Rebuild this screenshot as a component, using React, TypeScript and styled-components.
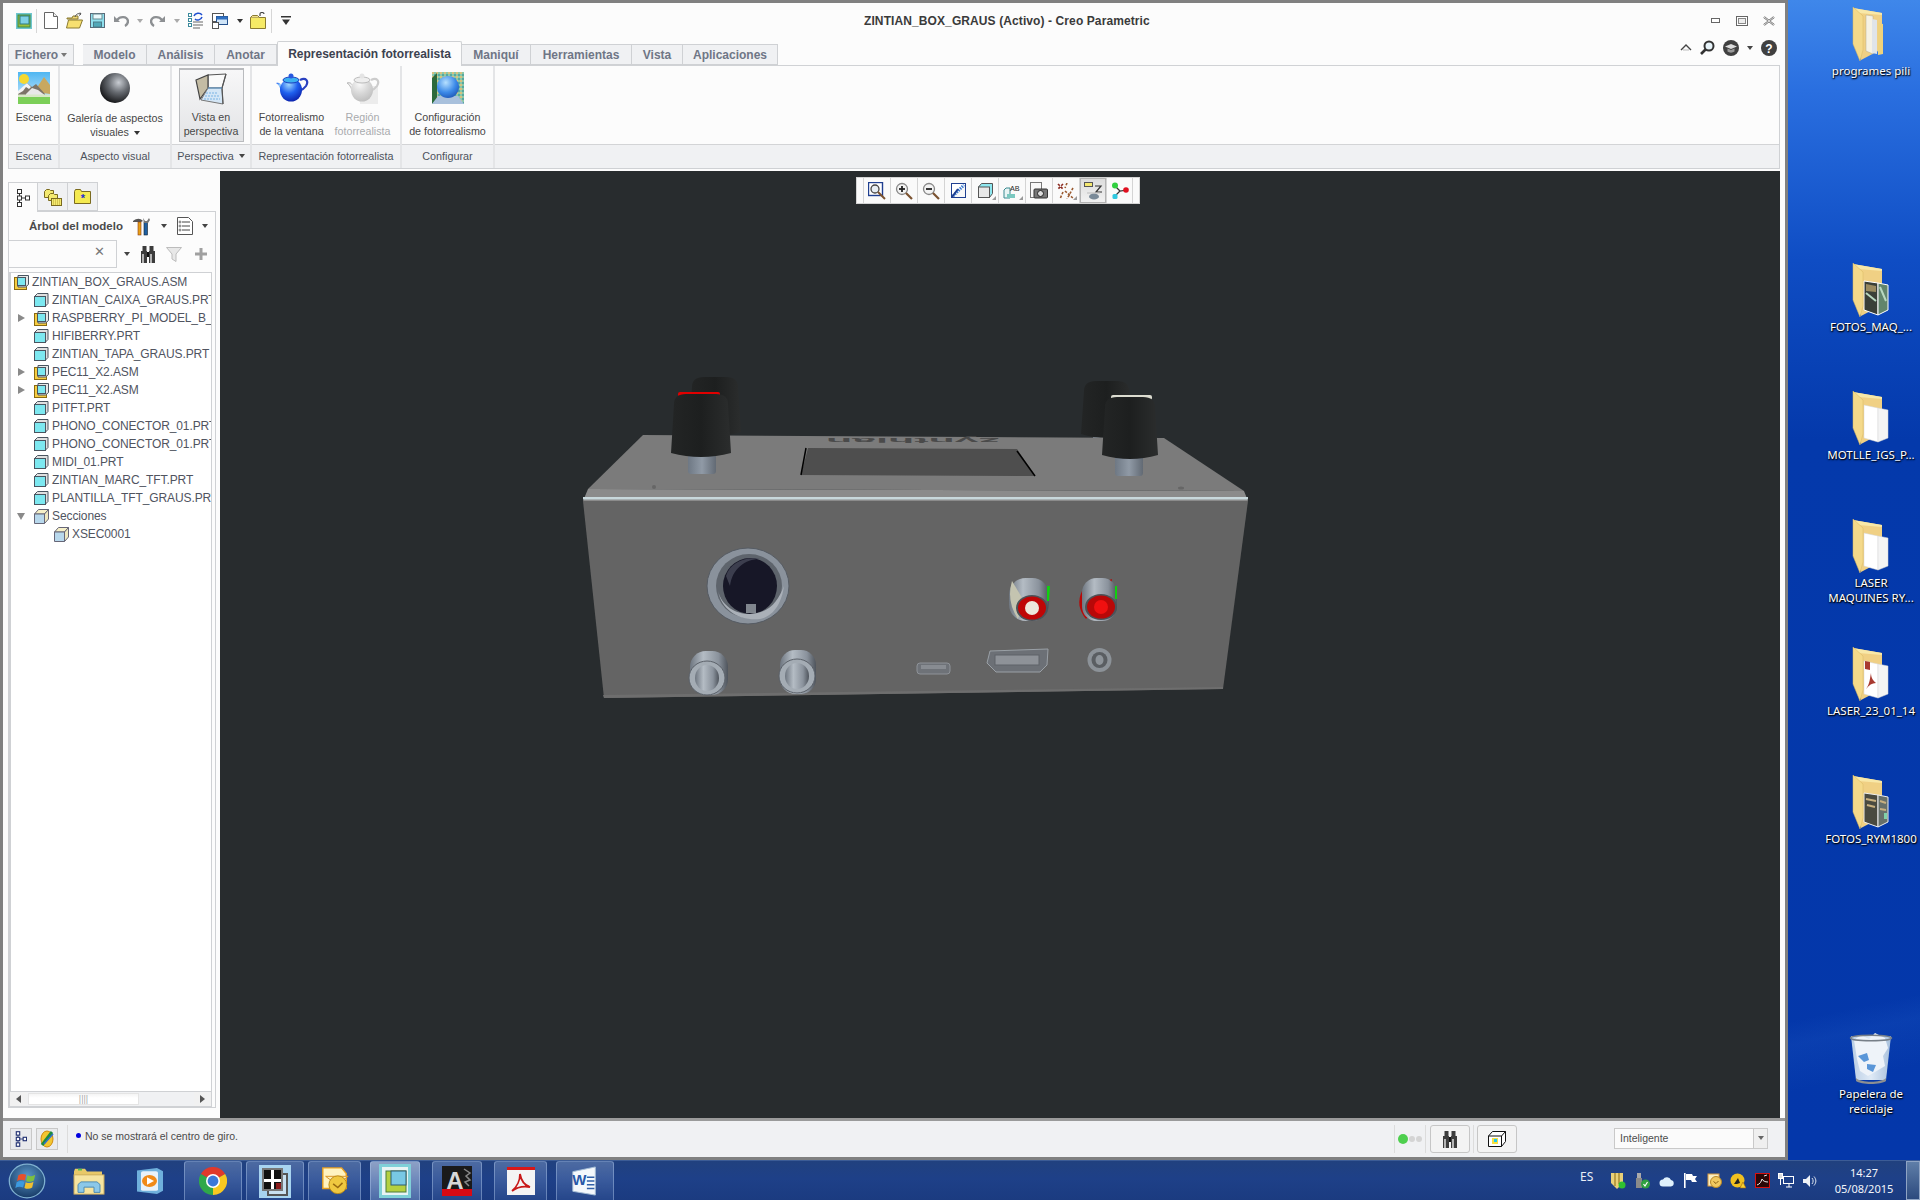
import React from "react";
import styled, { createGlobalStyle } from "styled-components";

const GlobalStyle = createGlobalStyle`
  html, body {
    margin: 0;
    padding: 0;
    background: #0438ab;
    overflow: hidden;
  }
  * {
    box-sizing: border-box;
  }
`;

const UI_FONT = `"Liberation Sans", Arial, sans-serif`;
const DESK_FONT = `"Noto Sans", "Open Sans", sans-serif`;

const Screen = styled.div`
  width: 1920px;
  height: 1200px;
  display: flex;
  flex-direction: column;
  overflow: hidden;
  font-family: ${UI_FONT};
`;

const Main = styled.div`
  height: 1160px;
  display: flex;
`;

const Window = styled.div`
  width: 1788px;
  height: 100%;
  display: flex;
  flex-direction: column;
  background: #fcfcfc;
  border: 3px solid #808080;
`;

const TitleBar = styled.div`
  height: 38px;
  padding-bottom: 3px;
  display: flex;
  align-items: center;
  flex-shrink: 0;
`;

const QuickBar = styled.div`
  width: 861px;
  display: flex;
  align-items: center;
  padding-left: 13px;
`;

const QuickSlot = styled.span<{ $ml?: number }>`
  display: flex;
  margin-left: ${({ $ml }) => $ml ?? 0}px;
`;

const QuickSep = styled.span<{ $ml: number }>`
  width: 1px;
  height: 24px;
  background: #d6d6d6;
  margin-left: ${({ $ml }) => $ml}px;
`;

const Title = styled.div`
  font-size: 12px;
  font-weight: bold;
  color: #3a3a3a;
  white-space: nowrap;
  letter-spacing: 0.1px;
`;

const WindowControls = styled.div`
  margin-left: auto;
  margin-right: 10px;
  display: flex;
  align-items: center;
  gap: 15px;
`;

const TabRow = styled.div`
  height: 24px;
  display: flex;
  align-items: flex-end;
  padding-left: 5px;
  flex-shrink: 0;
  position: relative;
  z-index: 1;
`;

const Tab = styled.div<{ $w: number; $active?: boolean; $ml?: number }>`
  width: ${({ $w }) => $w}px;
  height: ${({ $active }) => ($active ? 25 : 21)}px;
  margin-left: ${({ $ml }) => $ml ?? 0}px;
  margin-bottom: ${({ $active }) => ($active ? -1 : 0)}px;
  display: flex;
  align-items: center;
  justify-content: center;
  gap: 3px;
  font-size: 12px;
  font-weight: bold;
  color: ${({ $active }) => ($active ? "#3c4250" : "#6f7686")};
  background: ${({ $active }) => ($active ? "#fcfcfc" : "#f0f1f3")};
  border: 1px solid #cfd1d4;
  border-left-width: ${({ $active }) => ($active ? 1 : 0)}px;
  border-bottom-width: ${({ $active }) => ($active ? 0 : 1)}px;
  border-top-left-radius: ${({ $active }) => ($active ? 2 : 0)}px;
  border-top-right-radius: ${({ $active }) => ($active ? 2 : 0)}px;
  &:first-child {
    border-left-width: 1px;
  }
`;

const TabTools = styled.div`
  margin-left: auto;
  margin-right: 8px;
  height: 100%;
  display: flex;
  align-items: center;
  padding-bottom: 9px;
  margin-bottom: 1px;
`;

const ToolSlot = styled.span<{ $ml?: number }>`
  display: flex;
  margin-left: ${({ $ml }) => $ml ?? 0}px;
`;

const Ribbon = styled.div`
  height: 104px;
  margin: 0 5px;
  display: flex;
  flex-shrink: 0;
  border: 1px solid #cfd1d4;
  border-top-color: #d0d2d5;
`;

const RibbonGroup = styled.div<{ $w?: number }>`
  width: ${({ $w }) => ($w ? `${$w}px` : "auto")};
  flex: ${({ $w }) => ($w ? "none" : 1)};
  display: flex;
  flex-direction: column;
  border-right: ${({ $w }) => ($w ? "2px solid #e4e5e7" : "none")};
`;

const RibbonTools = styled.div`
  height: 78px;
  display: flex;
  justify-content: center;
  gap: 3px;
  padding-top: 2px;
`;

const GroupLabel = styled.div`
  flex: 1;
  display: flex;
  align-items: center;
  justify-content: center;
  gap: 5px;
  padding-bottom: 1px;
  font-size: 10.8px;
  color: #4d525c;
  background: #f0f1f3;
  border-top: 1px solid #d3d4d6;
  white-space: nowrap;
`;

const RibbonButton = styled.div<{ $w: number; $active?: boolean; $off?: boolean }>`
  width: ${({ $w }) => $w}px;
  height: 74px;
  display: flex;
  flex-direction: column;
  align-items: center;
  padding-top: ${({ $active }) => ($active ? 3 : 4)}px;
  font-size: 10.7px;
  line-height: 14px;
  text-align: center;
  white-space: nowrap;
  color: ${({ $off }) => ($off ? "#a9abae" : "#474747")};
  background: ${({ $active }) =>
    $active ? "linear-gradient(#f7f7f8, #e3e4e6)" : "transparent"};
  border: ${({ $active }) => ($active ? "1px solid #b9bbbe" : "none")};
  border-top-width: ${({ $active }) => ($active ? 2 : 0)}px;
`;

const RibbonIcon = styled.span<{ $gap?: number }>`
  height: 32px;
  margin-bottom: ${({ $gap }) => $gap ?? 6}px;
  display: block;
`;

const Caret = styled.span<{ $c?: string; $ml?: number }>`
  display: inline-block;
  width: 0;
  height: 0;
  margin-left: ${({ $ml }) => $ml ?? 0}px;
  border-left: 3px solid transparent;
  border-right: 3px solid transparent;
  border-top: 4px solid ${({ $c }) => $c ?? "#444"};
  vertical-align: middle;
`;

const Workspace = styled.div`
  flex: 1;
  min-height: 0;
  margin-top: 2px;
  display: flex;
  padding-right: 5px;
`;

const SidePanel = styled.div`
  width: 217px;
  display: flex;
  flex-direction: column;
  padding: 11px 4px 10px 5px;
`;

const PanelTabs = styled.div`
  height: 29px;
  display: flex;
  flex-shrink: 0;
`;

const PanelTab = styled.div<{ $active?: boolean }>`
  width: 30px;
  height: ${({ $active }) => ($active ? 30 : 29)}px;
  display: flex;
  align-items: center;
  justify-content: center;
  background: ${({ $active }) => ($active ? "#fcfcfc" : "#f0f1f3")};
  border: 1px solid #cfd1d4;
  border-left-width: ${({ $active }) => ($active ? 1 : 0)}px;
  border-bottom-width: ${({ $active }) => ($active ? 0 : 1)}px;
  position: relative;
`;

const PanelBody = styled.div`
  flex: 1;
  min-height: 0;
  display: flex;
  flex-direction: column;
  border: 1px solid #cfd1d4;
`;

const PanelHeader = styled.div`
  height: 28px;
  display: flex;
  align-items: center;
  padding-left: 20px;
  flex-shrink: 0;
`;

const PanelTitle = styled.span`
  width: 104px;
  font-size: 11.5px;
  font-weight: bold;
  color: #4a4a4a;
  white-space: nowrap;
`;

const SearchRow = styled.div`
  height: 28px;
  display: flex;
  align-items: center;
  flex-shrink: 0;
`;

const SearchBox = styled.div`
  width: 108px;
  height: 28px;
  display: flex;
  align-items: center;
  justify-content: flex-end;
  padding: 0 11px 6px 0;
  font-size: 13px;
  color: #777;
  border: 1px solid #cfd1d4;
  border-left: none;
`;

const Tree = styled.div`
  flex: 1;
  min-height: 0;
  margin: 4px 3px 0 0;
  overflow: hidden;
  background: #fff;
  border: 1px solid #cfd1d4;
  border-bottom: none;
  border-left-width: 2px;
`;

const TreeRow = styled.div<{ $pad: number }>`
  height: 18px;
  display: flex;
  align-items: center;
  padding-left: ${({ $pad }) => $pad}px;
  font-size: 12px;
  letter-spacing: -0.1px;
  color: #50545f;
  white-space: nowrap;
`;

const Toggle = styled.span`
  width: 16px;
  flex-shrink: 0;
  display: flex;
  align-items: center;
`;

const RowLabel = styled.span`
  margin-left: 3px;
`;

const ClosedArrow = styled.span`
  width: 0;
  height: 0;
  border-top: 4px solid transparent;
  border-bottom: 4px solid transparent;
  border-left: 7px solid #8a8a8a;
`;

const OpenArrow = styled.span`
  width: 0;
  height: 0;
  margin-left: -1px;
  border-left: 4.5px solid transparent;
  border-right: 4.5px solid transparent;
  border-top: 7px solid #8a8a8a;
`;

const ScrollBar = styled.div`
  height: 16px;
  margin-right: 3px;
  display: flex;
  align-items: stretch;
  flex-shrink: 0;
  background: #f0f1f3;
  border: 1px solid #cfd1d4;
`;

const ScrollEnd = styled.div`
  width: 17px;
  display: flex;
  align-items: center;
  justify-content: center;
  background: #f1f1f1;
`;

const ScrollThumb = styled.div`
  width: 111px;
  margin: 1px 0 1px 1px;
  display: flex;
  align-items: center;
  justify-content: center;
  background: linear-gradient(#f4f4f4, #fff 40%, #fff);
  border: 1px solid #e4e4e4;
  font-size: 9px;
  color: #aaa;
`;

const ScrollFill = styled.div`
  flex: 1;
`;

const LeftArrow = styled.span`
  width: 0;
  height: 0;
  border-top: 4px solid transparent;
  border-bottom: 4px solid transparent;
  border-right: 5px solid #555;
`;

const RightArrow = styled.span`
  width: 0;
  height: 0;
  border-top: 4px solid transparent;
  border-bottom: 4px solid transparent;
  border-left: 5px solid #555;
`;

const Canvas = styled.div`
  flex: 1;
  position: relative;
  background: #282c2e;
`;

const Scene = styled.svg`
  display: block;
  width: 100%;
  height: 100%;
`;

const ViewToolbar = styled.div`
  position: absolute;
  left: 636px;
  top: 6px;
  width: 284px;
  height: 27px;
  display: flex;
  padding: 0 5px 0 6px;
  background: #fafafa;
  border: 1px solid #d4d4d4;
`;

const ViewButton = styled.div<{ $on?: boolean }>`
  width: 27px;
  flex: none;
  display: flex;
  align-items: center;
  justify-content: center;
  position: relative;
  background: ${({ $on }) => ($on ? "linear-gradient(#dcdcdc, #f2f2f2)" : "transparent")};
  border-left: 1px solid #d4d4d4;
  box-shadow: ${({ $on }) => ($on ? "inset 0 0 0 1px #b4b4b4" : "none")};
  &:last-child {
    border-right: 1px solid #d4d4d4;
  }
`;

const StatusBar = styled.div`
  height: 39px;
  flex-shrink: 0;
  display: flex;
  align-items: center;
  background: #f0f1f3;
  border-top: 3px solid #9a9a9a;
  padding-left: 7px;
`;

const StatusIconButton = styled.div<{ $ml?: number }>`
  width: 22px;
  height: 22px;
  margin-left: ${({ $ml }) => $ml ?? 0}px;
  display: flex;
  align-items: center;
  justify-content: center;
  background: #e9eaec;
  border: 1px solid #c8c8c8;
`;

const StatusSep = styled.span<{ $ml: number }>`
  width: 1px;
  height: 28px;
  background: #dcdcdc;
  margin-left: ${({ $ml }) => $ml}px;
`;

const BlueDot = styled.span`
  width: 5px;
  height: 5px;
  margin: 0 4px 7px 8px;
  border-radius: 50%;
  background: #0000e0;
`;

const StatusText = styled.span`
  font-size: 10.5px;
  color: #4a4a4a;
  white-space: nowrap;
  margin-bottom: 6px;
`;

const StatusRight = styled.div`
  margin-left: auto;
  display: flex;
  align-items: center;
`;

const GreenDot = styled.span`
  width: 10px;
  height: 10px;
  margin-left: 3px;
  border-radius: 50%;
  background: #4ecf4e;
`;

const GreyDot = styled.span`
  width: 6px;
  height: 6px;
  margin-left: 1px;
  border-radius: 50%;
  background: #d4d4d4;
`;

const StatusButton = styled.div<{ $ml: number }>`
  width: 40px;
  height: 28px;
  margin-left: ${({ $ml }) => $ml}px;
  display: flex;
  align-items: center;
  justify-content: center;
  background: #f3f3f3;
  border: 1px solid #c6c6c6;
  border-radius: 3px;
`;

const SelectBox = styled.div`
  width: 154px;
  height: 21px;
  margin: 0 17px 2px 97px;
  display: flex;
  align-items: center;
  background: #fbfbfb;
  border: 1px solid #c9c9c9;
  font-size: 10.5px;
  color: #4d4d4d;
`;

const SelectText = styled.span`
  flex: 1;
  padding-left: 5px;
`;

const SelectArrow = styled.span`
  width: 14px;
  height: 100%;
  display: flex;
  align-items: center;
  justify-content: center;
  background: #efefef;
  border-left: 1px solid #c9c9c9;
`;

const Desktop = styled.div`
  flex: 1;
  position: relative;
  background:
    linear-gradient(168deg, rgba(255, 255, 255, 0) 86%, rgba(80, 150, 240, 0.08) 88%, rgba(255, 255, 255, 0) 92%),
    linear-gradient(#3f87ea 0, #2a6fe0 90px, #0f4dc4 260px, #0439ab 440px, #0437aa 100%);
`;

const DeskIcon = styled.div<{ $top: number }>`
  position: absolute;
  left: 36px;
  top: ${({ $top }) => $top}px;
  width: 94px;
  display: flex;
  flex-direction: column;
  align-items: center;
`;

const DeskLabel = styled.div`
  margin-top: 2px;
  font-family: ${DESK_FONT};
  font-size: 11.5px;
  line-height: 15px;
  text-align: center;
  color: #fff;
  white-space: nowrap;
  text-shadow: 0 1px 2px #000, 1px 1px 1px rgba(0, 0, 0, 0.8);
`;

const Taskbar = styled.div`
  height: 40px;
  display: flex;
  align-items: stretch;
  background: linear-gradient(#21417f, #1e4088 45%, #1b3b80);
  border-top: 1px solid #3c5c96;
`;

const StartSlot = styled.div`
  width: 54px;
  display: flex;
  align-items: center;
  justify-content: center;
`;

const PinSlot = styled.div<{ $w: number }>`
  width: ${({ $w }) => $w}px;
  display: flex;
  align-items: center;
  justify-content: center;
`;

const TaskButton = styled.div<{ $w: number; $ml: number; $on?: boolean }>`
  width: ${({ $w }) => $w}px;
  margin-left: ${({ $ml }) => $ml}px;
  display: flex;
  align-items: center;
  justify-content: center;
  border: 1px solid rgba(175, 200, 235, 0.45);
  border-bottom: none;
  border-radius: 3px 3px 0 0;
  background: ${({ $on }) =>
    $on
      ? "linear-gradient(rgba(230,240,255,0.55), rgba(150,180,225,0.4))"
      : "linear-gradient(rgba(170,195,235,0.32), rgba(70,105,170,0.25))"};
`;

const Tray = styled.div`
  margin-left: auto;
  display: flex;
  align-items: center;
`;

const LangLabel = styled.span`
  width: 30px;
  padding-left: 4px;
  font-family: ${DESK_FONT};
  font-size: 12px;
  color: #e9eef7;
  margin-bottom: 8px;
`;

const TraySlot = styled.span`
  width: 24px;
  display: flex;
  justify-content: center;
`;

const Clock = styled.div`
  width: 84px;
  font-family: ${DESK_FONT};
  font-size: 11px;
  line-height: 16px;
  text-align: center;
  color: #f2f5fa;
  white-space: nowrap;
`;

const ShowDesktop = styled.div`
  width: 14px;
  height: 100%;
  background: linear-gradient(#5f7ea8, #2c4a7e);
  border: 1px solid #8fa4c4;
`;

/* ---------- small icons ---------- */

const AppIcon = () => (
  <svg width="16" height="16" viewBox="0 0 16 16">
    <rect width="16" height="16" fill="#6fc6cf" />
    <rect x="2" y="2" width="12" height="12" fill="#9dbf3a" stroke="#3f8a3c" />
    <rect x="4" y="3" width="9" height="8" fill="#7fd0e6" stroke="#2f7c80" />
  </svg>
);

const NewIcon = () => (
  <svg width="14" height="17" viewBox="0 0 14 17">
    <path d="M.5.5h9l4 4v12H.5z" fill="#fff" stroke="#666" />
    <path d="M9.5.5v4h4" fill="#eee" stroke="#666" />
  </svg>
);

const OpenIcon = () => (
  <svg width="17" height="17" viewBox="0 0 17 17">
    <path d="M1 6h5l1-2h5v3H1z" fill="#f0d878" stroke="#8a7a30" />
    <path d="M.5 16l2-8h14l-3 8z" fill="#f7e070" stroke="#8a7a30" />
    <path d="M9 5c1-3 3-4 6-3l-1-1.500M15 2l-2 1.500" fill="none" stroke="#555" />
  </svg>
);

const SaveIcon = () => (
  <svg width="15" height="15" viewBox="0 0 15 15">
    <rect x=".5" y=".5" width="14" height="14" fill="#8fe0ee" stroke="#5a6a78" />
    <rect x="3" y="1" width="9" height="5" fill="#eafafc" stroke="#6a8a90" />
    <rect x="3.500" y="9" width="8" height="5" fill="#50a8b8" stroke="#4a7a88" />
  </svg>
);

const UndoIcon = ({ flip }: { flip?: boolean }) => (
  <svg width="15" height="12" viewBox="0 0 15 12">
    <g transform={flip ? "translate(15,0) scale(-1,1)" : undefined}>
      <path d="M3 5c3-4 10-4 11 1 0 2-1 4-3 5" fill="none" stroke="#8d9093" strokeWidth="2.400" />
      <path d="M0 1v6h6z" fill="#8d9093" />
    </g>
  </svg>
);

const RegenIcon = () => (
  <svg width="16" height="17" viewBox="0 0 16 17">
    <g fill="#fff" stroke="#3c8a9c">
      <rect x=".5" y="1.500" width="3" height="3" />
      <rect x=".5" y="6.500" width="3" height="3" />
      <rect x=".5" y="11.500" width="3" height="3" />
    </g>
    <path d="M6 4c1-3 6-4 8-1" fill="none" stroke="#1f4fd0" strokeWidth="1.500" />
    <path d="M14 5c-1 3-5 4-7 2" fill="none" stroke="#1f4fd0" strokeWidth="1.500" />
    <path d="M5 10h10M5 13h10M5 16h7" stroke="#666" />
  </svg>
);

const WindowsIcon = () => (
  <svg width="16" height="16" viewBox="0 0 16 16">
    <rect x=".5" y=".5" width="11" height="8" fill="#fff" stroke="#555" />
    <rect x="4.500" y="3.500" width="11" height="8" fill="#cfe4f7" stroke="#24508c" />
    <rect x="4.500" y="3.500" width="11" height="3" fill="#2f6fc0" />
    <rect x=".5" y="9.500" width="6" height="6" fill="#fff" stroke="#555" />
  </svg>
);

const FolderLockIcon = () => (
  <svg width="16" height="17" viewBox="0 0 16 17">
    <path d="M.5 5.500h15v11H.5z" fill="#f6ea66" stroke="#8a7a30" />
    <path d="M.5 5.500l2-2h5l2 2" fill="#f0e090" stroke="#8a7a30" />
    <path d="M10 4V2c0-2 4-2 4 0" fill="none" stroke="#444" strokeWidth="1.200" />
  </svg>
);

const MenuCaret = () => (
  <svg width="10" height="9" viewBox="0 0 10 9">
    <rect width="10" height="1.500" fill="#333" />
    <path d="M1 3.500h8L5 9z" fill="#333" />
  </svg>
);

const MinIcon = () => (
  <svg width="10" height="6" viewBox="0 0 10 6">
    <rect x=".5" y=".5" width="8" height="4" fill="#fff" stroke="#666" />
  </svg>
);

const MaxIcon = () => (
  <svg width="12" height="10" viewBox="0 0 12 10">
    <rect x=".5" y=".5" width="11" height="9" fill="#fff" stroke="#666" />
    <rect x="2.500" y="2.500" width="7" height="5" fill="#eee" stroke="#888" />
  </svg>
);

const CloseIcon = () => (
  <svg width="12" height="10" viewBox="0 0 12 10">
    <path d="M1 1l10 8M11 1L1 9" stroke="#666" strokeWidth="2.200" />
    <path d="M1 1l10 8M11 1L1 9" stroke="#fff" strokeWidth=".800" />
  </svg>
);

const ChevronUp = () => (
  <svg width="12" height="7" viewBox="0 0 12 7">
    <path d="M1 6l5-5 5 5" fill="none" stroke="#444" strokeWidth="1.400" />
    <path d="M3 6h6" stroke="#bbb" />
  </svg>
);

const FindIcon = () => (
  <svg width="15" height="15" viewBox="0 0 15 15">
    <circle cx="9" cy="6" r="4.500" fill="#e8f4fa" stroke="#333" strokeWidth="2" />
    <path d="M6 9l-5 5" stroke="#333" strokeWidth="2.600" />
  </svg>
);

const HatIcon = () => (
  <svg width="16" height="16" viewBox="0 0 16 16">
    <circle cx="8" cy="8" r="8" fill="#404040" />
    <path d="M2 6.500l6-2.500 6 2.500-6 2.500z" fill="#dcdcdc" />
    <path d="M4.500 8.500v3c2 1.500 5 1.500 7 0v-3L8 10z" fill="#9a9a9a" />
  </svg>
);

const HelpIcon = () => (
  <svg width="16" height="16" viewBox="0 0 16 16">
    <circle cx="8" cy="8" r="8" fill="#404040" />
    <text x="8" y="12.500" textAnchor="middle" fontFamily="Liberation Sans" fontWeight="bold" fontSize="12" fill="#fff">?</text>
  </svg>
);

const TreeTabIcon = () => (
  <svg width="14" height="18" viewBox="0 0 14 18">
    <g fill="#fff" stroke="#333">
      <rect x="1.500" y=".5" width="4" height="4" />
      <rect x="1.500" y="7" width="4" height="4" />
      <rect x="1.500" y="13.500" width="4" height="4" />
      <rect x="9.500" y="7" width="4" height="4" />
    </g>
    <path d="M3.500 4.500V7M3.500 11v2.500M5.500 9h4" stroke="#333" />
  </svg>
);

const LayersIcon = () => (
  <svg width="18" height="18" viewBox="0 0 18 18">
    <g fill="#f4ea70" stroke="#7a6a20">
      <path d="M.5 3.500l2-2h3l1 1h3v7h-9z" />
      <path d="M4.500 7.500l2-2h3l1 1h3v6h-9z" />
      <rect x="7.500" y="10.500" width="10" height="7" />
    </g>
    <path d="M9 12h7M9 14h7M9 16h7" stroke="#b8a030" strokeDasharray="1 1" />
  </svg>
);

const StarFolderIcon = () => (
  <svg width="17" height="15" viewBox="0 0 17 15">
    <path d="M.5 2.500l1-2h5l1 2h9v12H.5z" fill="#f4ea50" stroke="#7a6a20" />
    <text x="9" y="12.500" textAnchor="middle" fontSize="11" fontFamily="Liberation Sans" fontWeight="bold" fill="#1f2fd0">*</text>
  </svg>
);

const ToolsIcon = () => (
  <svg width="19" height="19" viewBox="0 0 19 19">
    <path d="M0 4c4-3 7-3 10 0l-2 1H0z" fill="#555" />
    <rect x="5" y="5" width="3" height="13" fill="#e8a018" stroke="#8a3a10" strokeWidth=".6" />
    <rect x="11" y="5" width="3.500" height="13" fill="#1f5fa0" stroke="#123" strokeWidth=".6" />
    <path d="M10 1l2 3h2l2-3 1 2-2 3h-4z" fill="#777" />
  </svg>
);

const ListIcon = () => (
  <svg width="16" height="18" viewBox="0 0 16 18">
    <path d="M.5.5h11l4 4v13H.5z" fill="#fff" stroke="#555" />
    <path d="M5 5h8M5 9h8M5 13h8" stroke="#444" />
    <g fill="#fff" stroke="#444" strokeWidth=".7">
      <circle cx="3" cy="5" r="1" />
      <circle cx="3" cy="9" r="1" />
      <circle cx="3" cy="13" r="1" />
    </g>
  </svg>
);

const Binoculars = () => (
  <svg width="16" height="17" viewBox="0 0 16 17">
    <rect x="2.500" y="0" width="4" height="6" fill="#3c3c3c" />
    <rect x="9.500" y="0" width="4" height="6" fill="#3c3c3c" />
    <rect x="1" y="5" width="6" height="12" fill="#3c3c3c" />
    <rect x="9" y="5" width="6" height="12" fill="#3c3c3c" />
    <rect x="2" y="8" width="2" height="9" fill="#b4b4b4" />
    <rect x="10" y="8" width="2" height="9" fill="#b4b4b4" />
    <rect x="7" y="6" width="2" height="5" fill="#111" />
  </svg>
);

const FilterIcon = () => (
  <svg width="16" height="15" viewBox="0 0 16 15">
    <path d="M.5.5h15L10 7v7.500L6 12V7z" fill="#e8e8e8" stroke="#bcbcbc" />
  </svg>
);

const PlusIcon = () => (
  <svg width="12" height="12" viewBox="0 0 12 12">
    <path d="M4.500 0h3v4.500H12v3H7.500V12h-3V7.500H0v-3h4.500z" fill="#a0a0a0" />
  </svg>
);

const PartIcon = () => (
  <svg width="15" height="14" viewBox="0 0 15 14" style={{ flexShrink: 0 }}>
    <path d="M.5 3.500l3-3h10.500v10l-3 3H.5z" fill="#e0e0e0" stroke="#4a5560" />
    <rect x=".5" y="3.500" width="11" height="10" fill="#7de8f0" stroke="#4a5560" />
  </svg>
);

const AsmIcon = () => (
  <svg width="15" height="15" viewBox="0 0 15 15" style={{ flexShrink: 0 }}>
    <rect x=".5" y="2.500" width="12" height="12" fill="#f6cc40" stroke="#8a6a10" />
    <path d="M4 .5h10.500v9l-3 2.500H4z" fill="#e8e8e8" stroke="#4a5560" />
    <rect x="3.500" y="2.500" width="8" height="8" fill="#7de8f0" stroke="#4a5560" />
  </svg>
);

const SectionIcon = () => (
  <svg width="15" height="15" viewBox="0 0 15 15" style={{ flexShrink: 0 }}>
    <path d="M.5 5l4-4.500h10l-4 4.500z" fill="#f6f0c8" stroke="#667" />
    <path d="M10.500 5l4-4.500v9.500l-4 4.500z" fill="#eee8c0" stroke="#667" />
    <path d="M.5 5h10v9.500H.5z" fill="#b8d8ec" stroke="#667" />
  </svg>
);

const StatusTreeIcon = () => (
  <svg width="12" height="16" viewBox="0 0 14 18">
    <g fill="#fff" stroke="#1f2f70" strokeWidth="1.300">
      <rect x="1.500" y=".5" width="4" height="4" />
      <rect x="1.500" y="7" width="4" height="4" />
      <rect x="1.500" y="13.500" width="4" height="4" />
      <rect x="9.500" y="7" width="4" height="4" />
    </g>
    <path d="M3.500 4.500V7M3.500 11v2.500M5.500 9h4" stroke="#1f2f70" />
  </svg>
);

const StatusPenIcon = () => (
  <svg width="16" height="18" viewBox="0 0 16 18">
    <ellipse cx="8" cy="9" rx="6" ry="8" fill="#f2c630" stroke="#d08a10" />
    <path d="M3 15L13 2" stroke="#1f8a3c" strokeWidth="3" />
    <path d="M5 14L14 4" stroke="#2f6fd0" strokeWidth="1.500" />
  </svg>
);

const BoxStatusIcon = () => (
  <svg width="18" height="16" viewBox="0 0 18 16">
    <path d="M.5 5l4-4.500h13v10l-4 5H.5z" fill="#fff" stroke="#111" />
    <path d="M.5 5h13v10.500M13.500 5l4-4.500" fill="none" stroke="#111" />
    <rect x="4" y="7" width="6" height="6" fill="#f6e040" />
    <rect x="6" y="8" width="3" height="3" fill="#20c8f0" />
  </svg>
);

/* ---------- ribbon pictures ---------- */

const SceneIcon = () => (
  <svg width="32" height="32" viewBox="0 0 32 32">
    <defs>
      <linearGradient id="sky" x1="0" y1="0" x2="0" y2="1">
        <stop offset="0" stopColor="#4fb6f2" />
        <stop offset="1" stopColor="#d8eefc" />
      </linearGradient>
    </defs>
    <rect width="32" height="32" fill="url(#sky)" />
    <path d="M16 20l10-15 6 8v9z" fill="#c8a860" />
    <path d="M0 21l9-10 5 4 4-3 9 10v3H0z" fill="#7c7468" />
    <path d="M0 19l9-8 4 4-2 2-3-2-3 4-5 3z" fill="#f4f4f4" />
    <path d="M8 22l6-6 6 2 8 6H8z" fill="#e8e8e8" />
    <rect y="24" width="32" height="8" fill="#7ccf58" />
    <rect y="22.500" width="32" height="2.500" fill="#d8e8c8" />
    <circle cx="6" cy="7" r="5" fill="#f6d830" />
  </svg>
);

const SphereIcon = () => (
  <svg width="32" height="32" viewBox="0 0 32 32">
    <defs>
      <radialGradient id="sphere" cx="0.62" cy="0.32" r="0.75">
        <stop offset="0" stopColor="#c8ccd2" />
        <stop offset="0.45" stopColor="#666a70" />
        <stop offset="1" stopColor="#0c0c0e" />
      </radialGradient>
    </defs>
    <circle cx="16" cy="16" r="15" fill="url(#sphere)" />
  </svg>
);

const PerspectiveIcon = () => (
  <svg width="32" height="32" viewBox="0 0 32 32">
    <path d="M13 2l18-1-4 14H13z" fill="#fafafa" stroke="#555" />
    <path d="M1 7l12-5v13L5 26z" fill="#c4bca4" stroke="#444" strokeWidth="1.200" />
    <path d="M13 15h14l1 16-22-4z" fill="#d4e6f6" stroke="#777" />
    <path d="M11 20h12M10 23h15M9 26h16" stroke="#7ab4e4" strokeDasharray="2 1" />
    <path d="M31 1l-4 14 1 16" fill="none" stroke="#555" strokeWidth="1.200" />
    <path d="M13 15h14" stroke="#5a9ad0" />
  </svg>
);

const TeapotIcon = ({ muted }: { muted?: boolean }) => {
  const id = muted ? "potGrey" : "potBlue";
  return (
    <svg width="34" height="32" viewBox="0 0 34 32">
      <defs>
        <radialGradient id={id} cx="0.4" cy="0.25" r="0.8">
          <stop offset="0" stopColor={muted ? "#f8f8f8" : "#9fd8ff"} />
          <stop offset="0.5" stopColor={muted ? "#d8d8d8" : "#1f60ee"} />
          <stop offset="1" stopColor={muted ? "#bcbcbc" : "#0a1ea8"} />
        </radialGradient>
      </defs>
      {muted && <rect x="14" y="14" width="18" height="18" fill="#ececec" />}
      <path d="M1 11c3-1 4 0 6 3l4 3-3 4c-3-3-3-8-7-10z" fill={`url(#${id})`} stroke={muted ? "#bbb" : "none"} />
      <path d="M25 8c6-3 9 1 6 6-2 3-4 4-7 5" fill="none" stroke={muted ? "#ccc" : "#2a40c0"} strokeWidth="2.200" />
      <ellipse cx="16" cy="18" rx="11" ry="11.500" fill={`url(#${id})`} />
      <ellipse cx="16" cy="8" rx="8" ry="3" fill={muted ? "#eee" : "#3cb0f0"} stroke={muted ? "#bbb" : "#1a40c0"} />
      <circle cx="16" cy="4" r="2.500" fill={muted ? "#e4e4e4" : "#2858e0"} />
    </svg>
  );
};

const ConfigIcon = () => (
  <svg width="32" height="32" viewBox="0 0 32 32">
    <defs>
      <radialGradient id="cfgBall" cx="0.4" cy="0.3" r="0.75">
        <stop offset="0" stopColor="#b6e0ff" />
        <stop offset="0.6" stopColor="#3c8ae8" />
        <stop offset="1" stopColor="#1f58b8" />
      </radialGradient>
      <pattern id="noise" width="4" height="4" patternUnits="userSpaceOnUse">
        <rect width="4" height="4" fill="#8cc8a8" />
        <rect width="2" height="2" fill="#d8c080" />
        <rect x="2" y="2" width="2" height="2" fill="#58a8a0" />
      </pattern>
    </defs>
    <rect width="32" height="32" fill="url(#noise)" />
    <path d="M0 6l5-5v26l-5 5z" fill="#2c6a3c" />
    <path d="M0 32l6-8h20l6 8z" fill="#a8c0dc" />
    <circle cx="16" cy="15" r="11" fill="url(#cfgBall)" />
  </svg>
);

/* ---------- view toolbar ---------- */

const ZoomFit = () => (
  <svg width="18" height="18" viewBox="0 0 18 18">
    <rect x=".5" y=".5" width="14" height="13" fill="#fff" stroke="#1f3f90" strokeWidth="1.400" />
    <circle cx="7" cy="7" r="4" fill="#e8eef4" stroke="#444" strokeWidth="1.300" />
    <path d="M10 10l7 7" stroke="#7a5230" strokeWidth="2" />
  </svg>
);

const ZoomGlass = ({ plus }: { plus?: boolean }) => (
  <svg width="18" height="18" viewBox="0 0 18 18">
    <circle cx="7" cy="7" r="5.500" fill="#f4f4f4" stroke="#888" strokeWidth="1.300" />
    <path d="M4 7h6" stroke="#222" strokeWidth="1.800" />
    {plus && <path d="M7 4v6" stroke="#222" strokeWidth="1.800" />}
    <path d="M11 11l6 6" stroke="#7a5230" strokeWidth="2.200" />
  </svg>
);

const ShadeIcon = () => (
  <svg width="15" height="15" viewBox="0 0 15 15">
    <rect x=".5" y=".5" width="14" height="14" fill="#fff" stroke="#1f3f90" />
    <path d="M2 14L14 2v12z" fill="#f8f8f8" />
    <path d="M2 13L13 2" stroke="#3a7ad0" strokeWidth="3" strokeDasharray="1.500 1" />
    <path d="M1 14L7 6" stroke="#1f3f90" strokeWidth="2" />
  </svg>
);

const CubeIcon = () => (
  <svg width="15" height="15" viewBox="0 0 15 15">
    <path d="M.5 4l3-3.500h11v10l-3 4H.5z" fill="#8fe8f0" stroke="#555" />
    <rect x=".5" y="4" width="11" height="10.500" fill="#e8e8e8" stroke="#555" />
  </svg>
);

const LabelIcon = () => (
  <svg width="19" height="16" viewBox="0 0 19 16">
    <path d="M1 7l2-2h4v10H1z" fill="#e8f4f4" stroke="#3a8a90" />
    <rect x="4" y="11" width="8" height="4" fill="#7ac8c0" />
    <text x="7" y="8" fontFamily="Liberation Mono" fontSize="8" fill="#333">AB</text>
  </svg>
);

const CameraIcon = () => (
  <svg width="18" height="17" viewBox="0 0 18 17">
    <rect x=".5" y=".5" width="11" height="15" fill="#f8f8f8" stroke="#777" />
    <rect x="4" y="7" width="13.500" height="9" rx="1" fill="#777" stroke="#333" />
    <circle cx="10.500" cy="11.500" r="3" fill="#ddd" stroke="#222" />
  </svg>
);

const PlanesIcon = () => (
  <svg width="18" height="16" viewBox="0 0 18 16">
    <g strokeWidth="1.600" strokeDasharray="2.500 1.500" fill="none">
      <path d="M1 1l5 5M6 1L1 6" stroke="#8a2a20" />
      <path d="M10 0L8 5M6 9L3 16M16 5l-6 11M8 8l9 8" stroke="#9a5a30" />
    </g>
  </svg>
);

const DisplayIcon = () => (
  <svg width="19" height="18" viewBox="0 0 19 18">
    <rect x=".5" y=".5" width="8" height="4" fill="#f4e870" stroke="#555" />
    <path d="M11 4h6l-5 6h6" fill="none" stroke="#333" strokeWidth="1.200" />
    <ellipse cx="10" cy="14.500" rx="5" ry="3" fill="#7a8a98" />
    <path d="M3 11h13" stroke="#bbb" />
  </svg>
);

const AxesIcon = () => (
  <svg width="18" height="18" viewBox="0 0 18 18">
    <path d="M4 4l5 5 7-1M9 9l-5 5" stroke="#333" strokeWidth="1.200" fill="none" />
    <circle cx="4" cy="3.500" r="3" fill="#30d040" />
    <circle cx="15" cy="8" r="2.800" fill="#e01020" />
    <rect x="1.500" y="12" width="5" height="5" rx="1.500" fill="#30c8e0" />
  </svg>
);

const CornerMark = styled.span`
  position: absolute;
  right: 2px;
  bottom: 3px;
  width: 0;
  height: 0;
  border-left: 4px solid transparent;
  border-bottom: 4px solid #999;
`;

/* ---------- desktop ---------- */

type FolderKind = "files" | "photo" | "paper" | "pdf" | "board";

const FolderContents = ({ kind }: { kind: FolderKind }) => {
  if (kind === "files")
    return (
      <g>
        <path d="M14 8l7 1v38l-7-3z" fill="#f6f2e4" stroke="#b4ac90" strokeWidth=".5" />
        <path d="M20 12l5 1v34l-5-1z" fill="#e0e4e8" />
        <path d="M26 16l5 1v30l-5 1z" fill="#efd27c" />
      </g>
    );
  if (kind === "photo")
    return (
      <g>
        <path d="M12 18l14 2v32l-14-5z" fill="#3a3f38" stroke="#fff" />
        <path d="M26 20l10 2v25l-10 5z" fill="#62856c" stroke="#fff" />
        <path d="M14 30l10 8M28 24l6 14" stroke="#b8d8c0" strokeWidth="2" />
        <path d="M14 21l10 2v6l-10-1z" fill="#998a60" />
      </g>
    );
  if (kind === "paper" || kind === "pdf")
    return (
      <g>
        <path d="M12 14l14 3v34l-14-4z" fill="#fff" stroke="#d4d4d4" strokeWidth=".5" />
        <path d="M26 17l10 2v28l-10 4z" fill="#f4f4f4" stroke="#d4d4d4" strokeWidth=".5" />
        {kind === "pdf" && (
          <path d="M13 14l5 1v8l-5-1zM14 42c4-5 4-12 5-16 0 6 3 8 5 10-4 0-7 2-10 6z" fill="#a83a30" />
        )}
      </g>
    );
  return (
    <g>
      <path d="M12 18l14 2v32l-14-5z" fill="#4a4a40" stroke="#eee" />
      <path d="M26 20l10 2v25l-10 5z" fill="#67706a" stroke="#eee" />
      <path d="M14 24l10 2M15 30l8 2M28 26l6 2M28 34l6 1" stroke="#c8b080" strokeWidth="2" />
      <rect x="32" y="38" width="3" height="6" fill="#80d0a8" />
    </g>
  );
};

const FolderIcon = ({ kind }: { kind: FolderKind }) => (
  <svg width="38" height="54" viewBox="0 0 38 54">
    <path d="M1 1l29 5v36L9 53z" fill="#f0d084" />
    <path d="M1 1l29 5v2L6 6z" fill="#f8e8a8" />
    <FolderContents kind={kind} />
    <path d="M1 0l10 9v34l-3 11-7-17z" fill="#f4d98a" stroke="#d8b860" strokeWidth=".5" />
  </svg>
);

const TrashIcon = () => (
  <svg width="44" height="52" viewBox="0 0 44 52">
    <defs>
      <linearGradient id="bin" x1="0" y1="0" x2="1" y2="0">
        <stop offset="0" stopColor="#b9cde4" />
        <stop offset="0.5" stopColor="#dfeaf6" />
        <stop offset="1" stopColor="#a8c0dc" />
      </linearGradient>
    </defs>
    <path d="M2 4h40l-5 44H7z" fill="url(#bin)" />
    <path d="M5 8l7-5 8 4 6-6 10 5 3 10-5 8 2 10-10 6-7 4-8-5-3-12z" fill="#eef3f9" />
    <path d="M9 24l9-3 2 7-5 2zM18 32l9 1-3 7-6-3z" fill="#5a96d8" />
    <ellipse cx="22" cy="6" rx="20.500" ry="2.800" fill="none" stroke="#777f88" strokeWidth="1.500" />
    <path d="M7 46c5 5 25 5 30 0v3c-5 4-25 4-30 0z" fill="#8c8f92" />
  </svg>
);

/* ---------- taskbar ---------- */

const StartOrb = () => (
  <svg width="38" height="36" viewBox="0 0 44 44" preserveAspectRatio="none">
    <defs>
      <radialGradient id="orb" cx="0.5" cy="0.35" r="0.7">
        <stop offset="0" stopColor="#5a96c8" />
        <stop offset="1" stopColor="#12345f" />
      </radialGradient>
    </defs>
    <circle cx="22" cy="22" r="20.500" fill="url(#orb)" stroke="#7fb0d0" strokeWidth="1.500" />
    <path d="M12 15c3-2 6-2 9-.5l-1.500 7c-3-1.500-6-1.500-9 .5z" fill="#e8502a" />
    <path d="M22.500 15c3 1.500 6 1.500 9-.5l-1.500 7c-3 2-6 2-9 .5z" fill="#7cc040" />
    <path d="M10 23.500c3-2 6-2 9-.5l-1.500 7c-3-1.500-6-1.500-9 .5z" fill="#3c9ae0" />
    <path d="M20.500 23.500c3 1.500 6 1.500 9-.5l-1.500 7c-3 2-6 2-9 .5z" fill="#f0c030" />
  </svg>
);

const ExplorerPin = () => (
  <svg width="32" height="28" viewBox="0 0 32 32" preserveAspectRatio="none">
    <path d="M1 5l1-3h10l2 3h15v24H1z" fill="#e8c868" />
    <rect x="5" y="2" width="4" height="2" fill="#50c050" />
    <rect x="1" y="9" width="30" height="22" fill="#f6e4a0" stroke="#c8a858" />
    <path d="M8 17h16l3 3v9H21v-6H11v6H5v-9z" fill="#8cc8e8" stroke="#4a88b0" />
  </svg>
);

const MediaPin = () => (
  <svg width="26" height="26" viewBox="0 0 26 32" preserveAspectRatio="none">
    <path d="M0 3l20-3 6 4v24l-6 4-20-3z" fill="#6fb0dc" />
    <rect x="4" y="4" width="17" height="24" rx="2" fill="#e8f2fa" />
    <circle cx="12.500" cy="16" r="7.500" fill="#f08a18" />
    <path d="M10 11.500l7 4.500-7 4.500z" fill="#fff" />
  </svg>
);

const ChromePin = () => (
  <svg width="28" height="28" viewBox="0 0 30 30">
    <path d="M15 15L2 7.500A15 15 0 0 1 28 7.500z" fill="#e0392b" />
    <path d="M15 15l13-7.500A15 15 0 0 1 15 30z" fill="#f8c820" />
    <path d="M15 15V30A15 15 0 0 1 2 7.500z" fill="#2fa84a" />
    <circle cx="15" cy="15" r="7.500" fill="#fff" />
    <circle cx="15" cy="15" r="5.800" fill="#3c78d8" />
  </svg>
);

const CrossPin = () => (
  <svg width="32" height="33" viewBox="0 0 32 33">
    <rect width="32" height="33" fill="#a8d4f0" />
    <rect x="9" y="9" width="19" height="21" fill="#c8e0f0" stroke="#555" strokeWidth="2" />
    <rect x="4" y="4" width="19" height="21" fill="#111" stroke="#777" strokeWidth="2" />
    <path d="M12 5h3v9h7v3h-7v7h-3v-7H5v-3h7z" fill="#fff" />
    <rect x="17" y="18" width="5" height="6" fill="#8a1a1a" />
  </svg>
);

const OutlookPin = () => (
  <svg width="30" height="30" viewBox="0 0 32 32">
    <path d="M3 2h20l5 6v16H3z" fill="#fff3c0" stroke="#e8a020" strokeWidth="1.500" />
    <path d="M6 11h24L18 20z" fill="#fbeeb8" stroke="#d89020" />
    <circle cx="19" cy="20" r="9.500" fill="#f0c840" stroke="#b88818" />
    <path d="M14 19l5 4 5-5" fill="none" stroke="#9a6a10" strokeWidth="1.600" />
  </svg>
);

const CreoPin = () => (
  <svg width="32" height="34" viewBox="0 0 32 34">
    <rect width="32" height="34" fill="#7fd0d8" />
    <rect x="3" y="3" width="26" height="28" fill="#e8f4f4" />
    <rect x="7" y="7" width="20" height="21" fill="#b4d040" stroke="#4a7a3c" />
    <rect x="12" y="7" width="15" height="14" fill="#78c8e4" stroke="#2f5c70" />
  </svg>
);

const AutocadPin = () => (
  <svg width="30" height="30" viewBox="0 0 30 30">
    <rect width="30" height="30" fill="#1a1a1a" />
    <rect y="23" width="30" height="7" fill="#d80a14" />
    <text x="13" y="23" textAnchor="middle" fontSize="24" fontWeight="bold" fontFamily="Liberation Sans" fill="#d8d8d8">A</text>
    <path d="M22 3l6 4-4 3 4 4-5 2 4 4" stroke="#888" strokeWidth="1.500" fill="none" />
  </svg>
);

const PdfPin = () => (
  <svg width="28" height="28" viewBox="0 0 28 28">
    <rect width="28" height="28" fill="#f4f4f4" />
    <rect width="28" height="3" fill="#d81818" />
    <path d="M5 24c5-4 8-11 8-17 1 6 4 11 10 13-6-1-13 0-18 4z" fill="none" stroke="#c81818" strokeWidth="1.800" />
  </svg>
);

const WordPin = () => (
  <svg width="30" height="30" viewBox="0 0 32 32">
    <path d="M3 6l24-5v30L3 27z" fill="#f4f8fc" stroke="#a8c0d8" />
    <path d="M18 12h8M18 16h8M18 20h8M18 24h8" stroke="#3060a8" strokeWidth="1.500" />
    <text x="10" y="20" textAnchor="middle" fontSize="16" fontWeight="bold" fontFamily="Liberation Sans" fill="#2858a8">W</text>
  </svg>
);

const Tray1 = () => (
  <svg width="16" height="17" viewBox="0 0 16 17">
    <path d="M1 1h12v10l-6 6-6-6z" fill="#e8d078" />
    <path d="M5 1v13M9 1v11" stroke="#a88a30" strokeWidth="1.500" />
    <circle cx="12" cy="13" r="3.500" fill="#30c030" />
  </svg>
);

const Tray2 = () => (
  <svg width="16" height="17" viewBox="0 0 16 17">
    <path d="M2 6h6v10H2z" fill="#8a8a8a" />
    <rect x="3" y="1" width="4" height="5" fill="#aaa" />
    <circle cx="11.500" cy="12" r="4.500" fill="#30a040" />
    <path d="M9.500 12l1.500 2 2.500-4" stroke="#fff" fill="none" strokeWidth="1.200" />
  </svg>
);

const Tray3 = () => (
  <svg width="15" height="12" viewBox="0 0 15 12">
    <path d="M4 11.500A3.500 3.500 0 0 1 4 4.500 4.500 4.500 0 0 1 12 5a3.300 3.300 0 0 1 0 6.500z" fill="#dff0fc" />
  </svg>
);

const Tray4 = () => (
  <svg width="15" height="15" viewBox="0 0 15 15">
    <rect x="1" y="0" width="1.600" height="15" fill="#fff" />
    <path d="M3 1h6l1 2h4l-2 3 2 3H9L8 7H3z" fill="#fff" />
  </svg>
);

const Tray5 = () => (
  <svg width="15" height="15" viewBox="0 0 15 15">
    <rect x="1" y="1" width="11" height="12" fill="#fbeec0" stroke="#d89a40" />
    <circle cx="9" cy="9" r="5.500" fill="#f0c860" stroke="#b88828" />
    <path d="M6.500 8.500l2.500 2 2.500-2.500" fill="none" stroke="#8a6010" />
  </svg>
);

const Tray6 = () => (
  <svg width="16" height="16" viewBox="0 0 16 16">
    <circle cx="7.500" cy="7.500" r="7" fill="#f0c020" />
    <path d="M4 11l4-6 2 5-3 1z" fill="#222" />
    <path d="M10 15l3-6 3 6z" fill="#f8d030" stroke="#a06010" strokeWidth=".6" />
  </svg>
);

const Tray7 = () => (
  <svg width="15" height="15" viewBox="0 0 15 15">
    <rect x=".5" y=".5" width="14" height="14" fill="#2a0808" stroke="#d81010" />
    <path d="M2 12c3-1 4-3 5-6 1 2 3 3 6 3M9 3l3-1" stroke="#eee" strokeWidth="1" fill="none" />
  </svg>
);

const Tray8 = () => (
  <svg width="16" height="15" viewBox="0 0 16 15">
    <rect x="5.500" y="3.500" width="10" height="7" fill="none" stroke="#fff" />
    <path d="M8 14h6M11 11v3" stroke="#fff" />
    <rect x="0.500" y="0.500" width="4" height="5" fill="#ddd" stroke="#fff" />
    <path d="M2.500 6v6" stroke="#fff" />
  </svg>
);

const Tray9 = () => (
  <svg width="14" height="14" viewBox="0 0 14 14">
    <path d="M0 5h3l4-4v12L3 9H0z" fill="#eef2f8" />
    <path d="M9 4c1.500 2 1.500 4 0 6M11 2.500c2.500 3 2.500 6 0 9" fill="none" stroke="#dfe6f0" />
  </svg>
);

/* ---------- the model in the viewport, in screen coordinates ---------- */

const Knob = ({ x, y, w, h }: { x: number; y: number; w: number; h: number }) => (
  <path
    d={`M${x + 3} ${y + 10} Q${x + 3} ${y} ${x + 15} ${y} L${x + w - 15} ${y} Q${x + w - 3} ${y} ${x + w - 3} ${y + 10} L${x + w} ${y + h - 5} Q${x + w / 2} ${y + h + 3} ${x} ${y + h - 5} Z`}
    fill="url(#knob)"
  />
);

const Barrel = ({ x, y, w, h }: { x: number; y: number; w: number; h: number }) => (
  <rect x={x} y={y} width={w} height={h} rx={w / 2.4} fill="url(#metal)" />
);

const BoxModel = () => (
  <Scene viewBox="220 170 1560 947">
    <defs>
      <linearGradient id="metal" x1="0" y1="0" x2="1" y2="0">
        <stop offset="0" stopColor="#6e7680" />
        <stop offset="0.35" stopColor="#b4bcc4" />
        <stop offset="0.75" stopColor="#8a929c" />
        <stop offset="1" stopColor="#4e545c" />
      </linearGradient>
      <linearGradient id="stem" x1="0" y1="0" x2="1" y2="0">
        <stop offset="0" stopColor="#6e7884" />
        <stop offset="0.5" stopColor="#909aa6" />
        <stop offset="1" stopColor="#626a74" />
      </linearGradient>
      <linearGradient id="knob" x1="0" y1="0" x2="1" y2="0">
        <stop offset="0" stopColor="#232525" />
        <stop offset="0.5" stopColor="#1d1f1f" />
        <stop offset="1" stopColor="#2b2d2d" />
      </linearGradient>
    </defs>

    <rect x="1093" y="436" width="12" height="18" fill="url(#stem)" />
    <Knob x={689} y={376} w={52} h={60} />
    <Knob x={1081} y={380} w={51} h={58} />

    <path d="M588 488L643 434L1164 437L1244 490Z" fill="#7b7b7b" />
    <path d="M588 488L1244 490L1248 500L583 500Z" fill="#8b8b8b" />
    <path d="M583 496H1248V498.500H583Z" fill="#c8d8dc" />
    <path d="M583 500L1248 500L1223 688L604 697Z" fill="#646464" />
    <path d="M604 697L1223 688L1223 686L603 694Z" fill="#6e6e6e" />

    <text
      transform="translate(913 436.500) rotate(180) scale(1 0.62)"
      textAnchor="middle"
      fontFamily="Liberation Sans"
      fontWeight="bold"
      fontSize="13"
      fill="#4a4a4a"
      textLength={174}
      lengthAdjust="spacingAndGlyphs"
    >
      zynthian
    </text>

    <path d="M801 474L808 447L1017 448L1035 475Z" fill="#4e4e4e" />
    <path d="M801 474L806 447" stroke="#000" strokeWidth="1.500" />
    <path d="M1017 450L1035 475" stroke="#000" strokeWidth="1.500" />
    <circle cx="654" cy="486" r="2" fill="#666" />
    <ellipse cx="1181" cy="487" rx="3" ry="1.500" fill="#666" />

    <rect x="688" y="452" width="28" height="21" rx="3" fill="url(#stem)" />
    <rect x="1115" y="454" width="28" height="21" rx="3" fill="url(#stem)" />
    <rect x="678" y="391" width="42" height="5" rx="2" fill="#e00000" />
    <Knob x={671} y={393} w={60} h={64} />
    <rect x="1111" y="394" width="41" height="5" rx="2" fill="#dcdcd0" />
    <Knob x={1102} y={396} w={56} h={63} />

    <ellipse cx="748" cy="585" rx="41" ry="38" fill="#8a929c" stroke="#565c64" />
    <ellipse cx="749" cy="585" rx="33" ry="32" fill="#5e646c" />
    <ellipse cx="750" cy="585" rx="27" ry="28" fill="#171727" />
    <path d="M726 575C730 562 745 555 760 558C745 558 732 568 730 585Z" fill="#3c3e4e" />
    <rect x="746" y="603" width="10" height="9" fill="#80868e" />
    <path d="M718 590C722 610 740 620 760 618C775 615 782 600 784 585C778 600 770 612 750 613C735 613 722 605 718 590Z" fill="#aab0b8" />

    <Barrel x={1009} y={577} w={40} h={43} />
    <path d="M1047 585L1050 585L1049 600L1047 600Z" fill="#10d010" />
    <path d="M1012 580Q1006 600 1018 618L1024 600Z" fill="#c4c4b0" />
    <ellipse cx="1032" cy="607" rx="16" ry="13" fill="#4c5258" />
    <ellipse cx="1032" cy="607" rx="14" ry="11.500" fill="#bf0606" />
    <ellipse cx="1032" cy="607" rx="7" ry="7" fill="#ece8dc" />

    <path d="M1082 590Q1075 605 1086 618L1110 590L1112 578Z" fill="#b80808" />
    <Barrel x={1082} y={577} w={35} h={43} />
    <path d="M1115 585L1117 585L1117 598L1115 598Z" fill="#10d010" />
    <ellipse cx="1101" cy="606" rx="16" ry="13" fill="#4c5258" />
    <ellipse cx="1101" cy="606" rx="14" ry="11.500" fill="#b80808" />
    <ellipse cx="1101" cy="606" rx="7" ry="7" fill="#f01010" />

    <Barrel x={690} y={650} w={38} h={44} />
    <ellipse cx="707" cy="677" rx="18" ry="17" fill="#a4acb4" stroke="#5a6068" />
    <ellipse cx="707" cy="677" rx="12" ry="13" fill="url(#metal)" />
    <Barrel x={780} y={649} w={36} h={44} />
    <ellipse cx="797" cy="675" rx="18" ry="17" fill="#a4acb4" stroke="#5a6068" />
    <ellipse cx="797" cy="675" rx="12" ry="13" fill="url(#metal)" />

    <rect x="917" y="662" width="33" height="11" rx="3" fill="#6e7278" stroke="#8e9298" />
    <rect x="921" y="664" width="25" height="4" fill="#888c92" />
    <path d="M990 650L1048 648L1047 664L1040 671H996L987 662Z" fill="#6c7076" stroke="#9aa0a6" />
    <rect x="995" y="654" width="44" height="10" fill="#8e9298" stroke="#5e6268" />
    <ellipse cx="1099.500" cy="659" rx="12" ry="12" fill="#8c9298" />
    <ellipse cx="1099.500" cy="659" rx="8" ry="8" fill="#5a5e62" />
    <ellipse cx="1099.500" cy="659" rx="4" ry="5" fill="#8e949a" />
  </Scene>
);

const TREE: { label: string; kind: "part" | "asm" | "section"; level: number; arrow?: "closed" | "open" }[] = [
  { label: "ZINTIAN_BOX_GRAUS.ASM", kind: "asm", level: 0 },
  { label: "ZINTIAN_CAIXA_GRAUS.PRT", kind: "part", level: 1 },
  { label: "RASPBERRY_PI_MODEL_B_", kind: "asm", level: 1, arrow: "closed" },
  { label: "HIFIBERRY.PRT", kind: "part", level: 1 },
  { label: "ZINTIAN_TAPA_GRAUS.PRT", kind: "part", level: 1 },
  { label: "PEC11_X2.ASM", kind: "asm", level: 1, arrow: "closed" },
  { label: "PEC11_X2.ASM", kind: "asm", level: 1, arrow: "closed" },
  { label: "PITFT.PRT", kind: "part", level: 1 },
  { label: "PHONO_CONECTOR_01.PRT", kind: "part", level: 1 },
  { label: "PHONO_CONECTOR_01.PRT", kind: "part", level: 1 },
  { label: "MIDI_01.PRT", kind: "part", level: 1 },
  { label: "ZINTIAN_MARC_TFT.PRT", kind: "part", level: 1 },
  { label: "PLANTILLA_TFT_GRAUS.PRT", kind: "part", level: 1 },
  { label: "Secciones", kind: "section", level: 1, arrow: "open" },
  { label: "XSEC0001", kind: "section", level: 2 },
];

const DESK_ITEMS: { top: number; kind: FolderKind; lines: string[] }[] = [
  { top: 7, kind: "files", lines: ["programes pili"] },
  { top: 263, kind: "photo", lines: ["FOTOS_MAQ_..."] },
  { top: 391, kind: "paper", lines: ["MOTLLE_IGS_P..."] },
  { top: 519, kind: "paper", lines: ["LASER", "MAQUINES RY..."] },
  { top: 647, kind: "pdf", lines: ["LASER_23_01_14"] },
  { top: 775, kind: "board", lines: ["FOTOS_RYM1800"] },
];

const App: React.FC = () => {
  return (
    <>
      <GlobalStyle />
      <Screen>
        <Main>
          <Window>
            <TitleBar>
              <QuickBar>
                <QuickSlot><AppIcon /></QuickSlot>
                <QuickSep $ml={4} />
                <QuickSlot $ml={7}><NewIcon /></QuickSlot>
                <QuickSlot $ml={8}><OpenIcon /></QuickSlot>
                <QuickSlot $ml={7}><SaveIcon /></QuickSlot>
                <QuickSlot $ml={9}><UndoIcon /></QuickSlot>
                <Caret $c="#aaa" $ml={8} />
                <QuickSlot $ml={7}><UndoIcon flip /></QuickSlot>
                <Caret $c="#aaa" $ml={9} />
                <QuickSlot $ml={8}><RegenIcon /></QuickSlot>
                <QuickSlot $ml={8}><WindowsIcon /></QuickSlot>
                <Caret $c="#333" $ml={9} />
                <QuickSlot $ml={7}><FolderLockIcon /></QuickSlot>
                <QuickSep $ml={5} />
                <QuickSlot $ml={9}><MenuCaret /></QuickSlot>
              </QuickBar>
              <Title>ZINTIAN_BOX_GRAUS (Activo) - Creo Parametric</Title>
              <WindowControls>
                <MinIcon />
                <MaxIcon />
                <CloseIcon />
              </WindowControls>
            </TitleBar>

            <TabRow>
              <Tab $w={66}>Fichero <Caret $c="#777" /></Tab>
              <Tab $w={64} $ml={9}>Modelo</Tab>
              <Tab $w={68}>Análisis</Tab>
              <Tab $w={62}>Anotar</Tab>
              <Tab $w={185} $active>Representación fotorrealista</Tab>
              <Tab $w={69}>Maniquí</Tab>
              <Tab $w={101}>Herramientas</Tab>
              <Tab $w={51}>Vista</Tab>
              <Tab $w={95}>Aplicaciones</Tab>
              <TabTools>
                <ToolSlot><ChevronUp /></ToolSlot>
                <ToolSlot $ml={8}><FindIcon /></ToolSlot>
                <ToolSlot $ml={8}><HatIcon /></ToolSlot>
                <Caret $c="#444" $ml={8} />
                <ToolSlot $ml={8}><HelpIcon /></ToolSlot>
              </TabTools>
            </TabRow>

            <Ribbon>
              <RibbonGroup $w={51}>
                <RibbonTools>
                  <RibbonButton $w={48}>
                    <RibbonIcon><SceneIcon /></RibbonIcon>
                    Escena
                  </RibbonButton>
                </RibbonTools>
                <GroupLabel>Escena</GroupLabel>
              </RibbonGroup>
              <RibbonGroup $w={112}>
                <RibbonTools>
                  <RibbonButton $w={108}>
                    <RibbonIcon $gap={7}><SphereIcon /></RibbonIcon>
                    Galería de aspectos
                    <span>visuales <Caret $c="#333" $ml={2} /></span>
                  </RibbonButton>
                </RibbonTools>
                <GroupLabel>Aspecto visual</GroupLabel>
              </RibbonGroup>
              <RibbonGroup $w={80}>
                <RibbonTools>
                  <RibbonButton $w={65} $active>
                    <RibbonIcon $gap={5}><PerspectiveIcon /></RibbonIcon>
                    Vista en
                    <br />
                    perspectiva
                  </RibbonButton>
                </RibbonTools>
                <GroupLabel>Perspectiva <Caret $c="#444" /></GroupLabel>
              </RibbonGroup>
              <RibbonGroup $w={150}>
                <RibbonTools>
                  <RibbonButton $w={70}>
                    <RibbonIcon><TeapotIcon /></RibbonIcon>
                    Fotorrealismo
                    <br />
                    de la ventana
                  </RibbonButton>
                  <RibbonButton $w={66} $off>
                    <RibbonIcon><TeapotIcon muted /></RibbonIcon>
                    Región
                    <br />
                    fotorrealista
                  </RibbonButton>
                </RibbonTools>
                <GroupLabel>Representación fotorrealista</GroupLabel>
              </RibbonGroup>
              <RibbonGroup $w={93}>
                <RibbonTools>
                  <RibbonButton $w={88}>
                    <RibbonIcon><ConfigIcon /></RibbonIcon>
                    Configuración
                    <br />
                    de fotorrealismo
                  </RibbonButton>
                </RibbonTools>
                <GroupLabel>Configurar</GroupLabel>
              </RibbonGroup>
              <RibbonGroup>
                <RibbonTools />
                <GroupLabel />
              </RibbonGroup>
            </Ribbon>

            <Workspace>
              <SidePanel>
                <PanelTabs>
                  <PanelTab $active><TreeTabIcon /></PanelTab>
                  <PanelTab><LayersIcon /></PanelTab>
                  <PanelTab><StarFolderIcon /></PanelTab>
                </PanelTabs>
                <PanelBody>
                  <PanelHeader>
                    <PanelTitle>Árbol del modelo</PanelTitle>
                    <ToolSlot><ToolsIcon /></ToolSlot>
                    <Caret $c="#444" $ml={9} />
                    <ToolSlot $ml={10}><ListIcon /></ToolSlot>
                    <Caret $c="#444" $ml={9} />
                  </PanelHeader>
                  <SearchRow>
                    <SearchBox>✕</SearchBox>
                    <Caret $c="#444" $ml={7} />
                    <ToolSlot $ml={10}><Binoculars /></ToolSlot>
                    <ToolSlot $ml={10}><FilterIcon /></ToolSlot>
                    <ToolSlot $ml={13}><PlusIcon /></ToolSlot>
                  </SearchRow>
                  <Tree>
                    {TREE.map((row, i) => (
                      <TreeRow key={i} $pad={row.level === 0 ? 3 : 7 + (row.level - 1) * 20}>
                        {row.level > 0 && (
                          <Toggle>
                            {row.arrow === "closed" && <ClosedArrow />}
                            {row.arrow === "open" && <OpenArrow />}
                          </Toggle>
                        )}
                        {row.kind === "part" && <PartIcon />}
                        {row.kind === "asm" && <AsmIcon />}
                        {row.kind === "section" && <SectionIcon />}
                        <RowLabel>{row.label}</RowLabel>
                      </TreeRow>
                    ))}
                  </Tree>
                  <ScrollBar>
                    <ScrollEnd><LeftArrow /></ScrollEnd>
                    <ScrollThumb>||||</ScrollThumb>
                    <ScrollFill />
                    <ScrollEnd><RightArrow /></ScrollEnd>
                  </ScrollBar>
                </PanelBody>
              </SidePanel>

              <Canvas>
                <BoxModel />
                <ViewToolbar>
                  <ViewButton><ZoomFit /></ViewButton>
                  <ViewButton><ZoomGlass plus /></ViewButton>
                  <ViewButton><ZoomGlass /></ViewButton>
                  <ViewButton><ShadeIcon /></ViewButton>
                  <ViewButton><CubeIcon /><CornerMark /></ViewButton>
                  <ViewButton><LabelIcon /><CornerMark /></ViewButton>
                  <ViewButton><CameraIcon /></ViewButton>
                  <ViewButton><PlanesIcon /><CornerMark /></ViewButton>
                  <ViewButton $on><DisplayIcon /></ViewButton>
                  <ViewButton><AxesIcon /></ViewButton>
                </ViewToolbar>
              </Canvas>
            </Workspace>

            <StatusBar>
              <StatusIconButton><StatusTreeIcon /></StatusIconButton>
              <StatusIconButton $ml={4}><StatusPenIcon /></StatusIconButton>
              <StatusSep $ml={9} />
              <BlueDot />
              <StatusText>No se mostrará el centro de giro.</StatusText>
              <StatusRight>
                <StatusSep $ml={0} />
                <GreenDot />
                <GreyDot />
                <GreyDot />
                <StatusSep $ml={3} />
                <StatusButton $ml={4}><Binoculars /></StatusButton>
                <StatusSep $ml={3} />
                <StatusButton $ml={3}><BoxStatusIcon /></StatusButton>
                <SelectBox>
                  <SelectText>Inteligente</SelectText>
                  <SelectArrow><Caret $c="#666" /></SelectArrow>
                </SelectBox>
              </StatusRight>
            </StatusBar>
          </Window>

          <Desktop>
            {DESK_ITEMS.map((item) => (
              <DeskIcon key={item.top} $top={item.top}>
                <FolderIcon kind={item.kind} />
                <DeskLabel>
                  {item.lines.map((line) => (
                    <div key={line}>{line}</div>
                  ))}
                </DeskLabel>
              </DeskIcon>
            ))}
            <DeskIcon $top={1032}>
              <TrashIcon />
              <DeskLabel>
                <div>Papelera de</div>
                <div>reciclaje</div>
              </DeskLabel>
            </DeskIcon>
          </Desktop>
        </Main>

        <Taskbar>
          <StartSlot><StartOrb /></StartSlot>
          <PinSlot $w={70}><ExplorerPin /></PinSlot>
          <PinSlot $w={52}><MediaPin /></PinSlot>
          <TaskButton $w={58} $ml={8}><ChromePin /></TaskButton>
          <TaskButton $w={58} $ml={4}><CrossPin /></TaskButton>
          <TaskButton $w={53} $ml={4}><OutlookPin /></TaskButton>
          <TaskButton $w={50} $ml={9} $on><CreoPin /></TaskButton>
          <TaskButton $w={50} $ml={12}><AutocadPin /></TaskButton>
          <TaskButton $w={53} $ml={12}><PdfPin /></TaskButton>
          <TaskButton $w={58} $ml={9}><WordPin /></TaskButton>
          <Tray>
            <LangLabel>ES</LangLabel>
            <TraySlot><Tray1 /></TraySlot>
            <TraySlot><Tray2 /></TraySlot>
            <TraySlot><Tray3 /></TraySlot>
            <TraySlot><Tray4 /></TraySlot>
            <TraySlot><Tray5 /></TraySlot>
            <TraySlot><Tray6 /></TraySlot>
            <TraySlot><Tray7 /></TraySlot>
            <TraySlot><Tray8 /></TraySlot>
            <TraySlot><Tray9 /></TraySlot>
            <Clock>
              <div>14:27</div>
              <div>05/08/2015</div>
            </Clock>
            <ShowDesktop />
          </Tray>
        </Taskbar>
      </Screen>
    </>
  );
};

export default App;
